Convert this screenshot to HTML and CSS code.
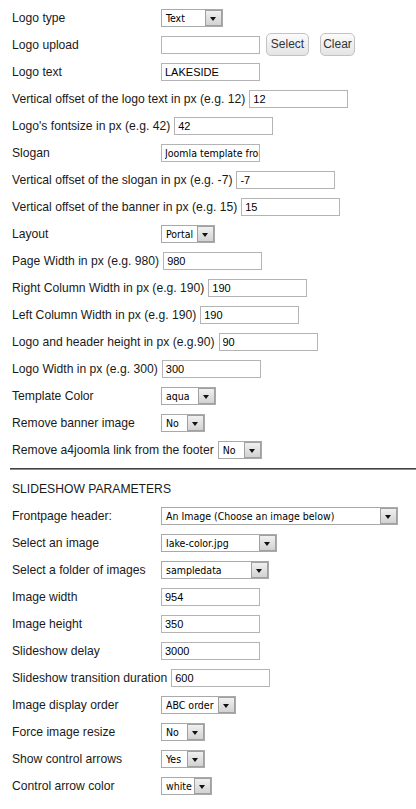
FILE: index.html
```html
<!DOCTYPE html>
<html>
<head>
<meta charset="utf-8">
<link rel="stylesheet" href="styles.css">
</head>
<body>
<div class="params">
  <div class="row"><span class="lbl">Logo type</span><span class="sel w62"><span class="val">Text</span><span class="arr"></span></span></div>
  <div class="row"><span class="lbl">Logo upload</span><input class="inp" type="text" value=""><span class="btn b-select">Select</span><span class="btn b-clear">Clear</span></div>
  <div class="row"><span class="lbl">Logo text</span><input class="inp" type="text" value="LAKESIDE"></div>
  <div class="row"><span class="lbl">Vertical offset of the logo text in px (e.g. 12)</span><input class="inp" type="text" value="12"></div>
  <div class="row"><span class="lbl">Logo's fontsize in px (e.g. 42)</span><input class="inp" type="text" value="42"></div>
  <div class="row"><span class="lbl">Slogan</span><input class="inp tah" type="text" value="Joomla template from a4joomla"></div>
  <div class="row"><span class="lbl">Vertical offset of the slogan in px (e.g. -7)</span><input class="inp" type="text" value="-7"></div>
  <div class="row"><span class="lbl">Vertical offset of the banner in px (e.g. 15)</span><input class="inp" type="text" value="15"></div>
  <div class="row"><span class="lbl">Layout</span><span class="sel w54"><span class="val">Portal</span><span class="arr"></span></span></div>
  <div class="row"><span class="lbl">Page Width in px (e.g. 980)</span><input class="inp" type="text" value="980"></div>
  <div class="row"><span class="lbl">Right Column Width in px (e.g. 190)</span><input class="inp" type="text" value="190"></div>
  <div class="row"><span class="lbl">Left Column Width in px (e.g. 190)</span><input class="inp" type="text" value="190"></div>
  <div class="row"><span class="lbl">Logo and header height in px (e.g.90)</span><input class="inp" type="text" value="90"></div>
  <div class="row"><span class="lbl">Logo Width in px (e.g. 300)</span><input class="inp" type="text" value="300"></div>
  <div class="row"><span class="lbl">Template Color</span><span class="sel w55"><span class="val">aqua</span><span class="arr"></span></span></div>
  <div class="row"><span class="lbl">Remove banner image</span><span class="sel w44"><span class="val">No</span><span class="arr"></span></span></div>
  <div class="row"><span class="lbl">Remove a4joomla link from the footer</span><span class="sel w44"><span class="val">No</span><span class="arr"></span></span></div>
  <div class="sep"></div>
  <div class="row"><span class="lbl">SLIDESHOW PARAMETERS</span></div>
  <div class="row"><span class="lbl">Frontpage header:</span><span class="sel w237"><span class="val">An Image (Choose an image below)</span><span class="arr"></span></span></div>
  <div class="row"><span class="lbl">Select an image</span><span class="sel w116"><span class="val">lake-color.jpg</span><span class="arr"></span></span></div>
  <div class="row"><span class="lbl">Select a folder of images</span><span class="sel w108"><span class="val">sampledata</span><span class="arr"></span></span></div>
  <div class="row"><span class="lbl">Image width</span><input class="inp" type="text" value="954"></div>
  <div class="row"><span class="lbl">Image height</span><input class="inp" type="text" value="350"></div>
  <div class="row"><span class="lbl">Slideshow delay</span><input class="inp" type="text" value="3000"></div>
  <div class="row"><span class="lbl">Slideshow transition duration</span><input class="inp" type="text" value="600"></div>
  <div class="row"><span class="lbl">Image display order</span><span class="sel w75"><span class="val">ABC order</span><span class="arr"></span></span></div>
  <div class="row"><span class="lbl">Force image resize</span><span class="sel w44"><span class="val">No</span><span class="arr"></span></span></div>
  <div class="row"><span class="lbl">Show control arrows</span><span class="sel w44"><span class="val">Yes</span><span class="arr"></span></span></div>
  <div class="row"><span class="lbl">Control arrow color</span><span class="sel w51"><span class="val">white</span><span class="arr"></span></span></div>
</div>
</body>
</html>
```
FILE: styles.css
```css
html, body {
  margin: 0;
  padding: 0;
  background: #ffffff;
}
body {
  font-family: "Liberation Sans", Arial, sans-serif;
  font-size: 12.15px;
  color: #1a1a1a;
  overflow: hidden;
}
.params {
  padding: 4px 0 0 0;
}
.row {
  display: flex;
  align-items: center;
  height: 27px;
  padding-left: 12px;
  white-space: nowrap;
}
.lbl {
  min-width: 145px;
  margin-right: 4px;
  flex: none;
}
.inp {
  box-sizing: border-box;
  width: 99px;
  height: 18px;
  margin: 0;
  border: 1px solid #b4b4b4;
  border-radius: 0;
  background: #fff;
  font-family: "Liberation Sans", Arial, sans-serif;
  font-size: 11px;
  line-height: 16px;
  padding: 0 0 0 3px;
  color: #000;
  outline: none;
  flex: none;
}
.inp.tah {
  font-family: "DejaVu Sans Condensed", "DejaVu Sans", sans-serif;
  font-size: 10.5px;
}
.sel {
  box-sizing: border-box;
  display: flex;
  align-items: center;
  height: 18px;
  border: 1px solid #a9a9a9;
  background: #fff;
  flex: none;
}
.sel .val {
  flex: 1;
  padding-left: 4px;
  font-family: "DejaVu Sans Condensed", "DejaVu Sans", sans-serif;
  font-size: 10.5px;
  color: #000;
  overflow: hidden;
}
.sel .arr {
  box-sizing: border-box;
  width: 17px;
  height: 16px;
  border: 1px solid #a0a0a0;
  background: linear-gradient(#f0f0f0, #d2d2d2);
  position: relative;
  flex: none;
}
.sel .arr::after {
  content: "";
  position: absolute;
  left: 4px;
  top: 6px;
  border-left: 3.5px solid transparent;
  border-right: 3.5px solid transparent;
  border-top: 4px solid #111;
}
.w44 { width: 44px; }
.w51 { width: 51px; }
.w54 { width: 54px; }
.w55 { width: 55px; }
.w62 { width: 62px; }
.w75 { width: 75px; }
.w108 { width: 108px; }
.w116 { width: 116px; }
.w237 { width: 237px; }
.btn {
  box-sizing: border-box;
  height: 23px;
  border: 1px solid #c2c2c2;
  border-radius: 5px;
  background: linear-gradient(#fbfbfb, #e4e4e4);
  color: #333;
  font-size: 12px;
  line-height: 21px;
  text-align: center;
  flex: none;
}
.b-select {
  width: 43px;
  margin-left: 6px;
}
.b-clear {
  width: 35px;
  margin-left: 11px;
}
.sep {
  height: 0;
  margin: 5px 0 5px 10px;
  border-top: 1px solid #444;
  border-bottom: 1px solid #8a8a8a;
}
```
